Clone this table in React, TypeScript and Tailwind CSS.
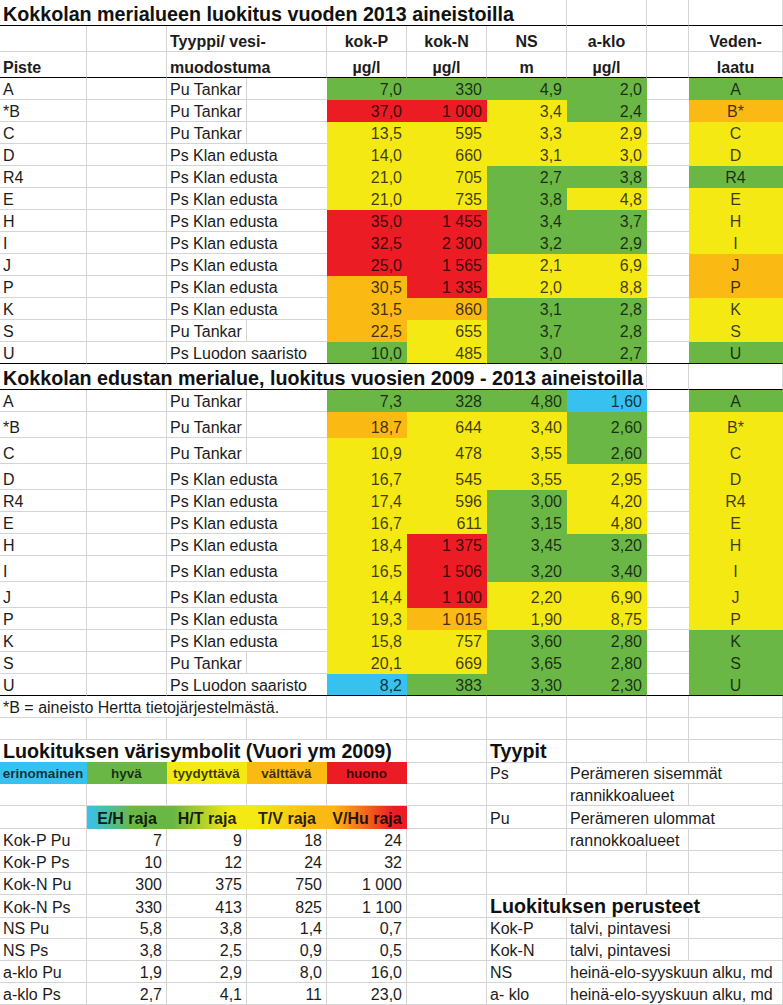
import type { ReactNode } from "react"

type Fill = "G" | "Y" | "R" | "O" | "B"

const FILL: Record<Fill, { bg: string; r: string; b: string }> = {
  G: { bg: "bg-[#6bb746]", r: "border-r-[#6bb746]", b: "border-b-[#6bb746]" },
  Y: { bg: "bg-[#f4e912]", r: "border-r-[#f4e912]", b: "border-b-[#f4e912]" },
  R: { bg: "bg-[#ec1c24]", r: "border-r-[#ec1c24]", b: "border-b-[#ec1c24]" },
  O: { bg: "bg-[#fbb914]", r: "border-r-[#fbb914]", b: "border-b-[#fbb914]" },
  B: { bg: "bg-[#37c1ef]", r: "border-r-[#37c1ef]", b: "border-b-[#37c1ef]" },
}

const COLS = "grid grid-cols-[87px_80px_80px_80px_80px_80px_80px_80px_42px_94px]"

const ALIGN = {
  left: "justify-start pl-[3px]",
  right: "justify-end pr-[4px]",
  center: "justify-center",
}

interface CellProps {
  span?: string
  fill?: Fill
  align?: "left" | "right" | "center"
  black?: boolean
  noRight?: boolean
  className?: string
  children?: ReactNode
}

function Cell({ span = "", fill, align = "left", black, noRight, className = "", children }: CellProps) {
  const f = fill ? FILL[fill] : null
  const right = noRight ? "" : `border-r ${f ? f.r : "border-r-[#d4d4d4]"}`
  const bottom = black ? "border-b-black" : f ? f.b : "border-b-[#d4d4d4]"
  const tone = f ? `${f.bg} text-black/75` : "text-[#1c1c1c]"
  return (
    <div className={`${span} flex items-end whitespace-nowrap border-b ${right} ${bottom} ${tone} ${ALIGN[align]} ${className}`}>
      {children}
    </div>
  )
}

function Row({ h = "h-[22px]", children }: { h?: string; children: ReactNode }) {
  return <div className={`${COLS} ${h}`}>{children}</div>
}

interface Point {
  p: string
  t: string
  v: string[]
  c: string
  l: string
  tall?: boolean
}

const T1: Point[] = [
  { p: "A", t: "Pu Tankar", v: ["7,0", "330", "4,9", "2,0"], c: "GGGGG", l: "A" },
  { p: "*B", t: "Pu Tankar", v: ["37,0", "1 000", "3,4", "2,4"], c: "RRYGO", l: "B*" },
  { p: "C", t: "Pu Tankar", v: ["13,5", "595", "3,3", "2,9"], c: "YYYYY", l: "C" },
  { p: "D", t: "Ps Klan edusta", v: ["14,0", "660", "3,1", "3,0"], c: "YYYYY", l: "D" },
  { p: "R4", t: "Ps Klan edusta", v: ["21,0", "705", "2,7", "3,8"], c: "YYGGG", l: "R4" },
  { p: "E", t: "Ps Klan edusta", v: ["21,0", "735", "3,8", "4,8"], c: "YYGYY", l: "E" },
  { p: "H", t: "Ps Klan edusta", v: ["35,0", "1 455", "3,4", "3,7"], c: "RRGGY", l: "H" },
  { p: "I", t: "Ps Klan edusta", v: ["32,5", "2 300", "3,2", "2,9"], c: "RRGGY", l: "I" },
  { p: "J", t: "Ps Klan edusta", v: ["25,0", "1 565", "2,1", "6,9"], c: "RRYYO", l: "J" },
  { p: "P", t: "Ps Klan edusta", v: ["30,5", "1 335", "2,0", "8,8"], c: "ORYYO", l: "P" },
  { p: "K", t: "Ps Klan edusta", v: ["31,5", "860", "3,1", "2,8"], c: "OOGGY", l: "K" },
  { p: "S", t: "Pu Tankar", v: ["22,5", "655", "3,7", "2,8"], c: "OYGGY", l: "S" },
  { p: "U", t: "Ps Luodon saaristo", v: ["10,0", "485", "3,0", "2,7"], c: "GYGGG", l: "U" },
]

const T2: Point[] = [
  { p: "A", t: "Pu Tankar", v: ["7,3", "328", "4,80", "1,60"], c: "GGGBG", l: "A" },
  { p: "*B", t: "Pu Tankar", v: ["18,7", "644", "3,40", "2,60"], c: "OYYGY", l: "B*", tall: true },
  { p: "C", t: "Pu Tankar", v: ["10,9", "478", "3,55", "2,60"], c: "YYYGY", l: "C", tall: true },
  { p: "D", t: "Ps Klan edusta", v: ["16,7", "545", "3,55", "2,95"], c: "YYYYY", l: "D", tall: true },
  { p: "R4", t: "Ps Klan edusta", v: ["17,4", "596", "3,00", "4,20"], c: "YYGYY", l: "R4" },
  { p: "E", t: "Ps Klan edusta", v: ["16,7", "611", "3,15", "4,80"], c: "YYGYY", l: "E" },
  { p: "H", t: "Ps Klan edusta", v: ["18,4", "1 375", "3,45", "3,20"], c: "YRGGY", l: "H" },
  { p: "I", t: "Ps Klan edusta", v: ["16,5", "1 506", "3,20", "3,40"], c: "YRGGY", l: "I", tall: true },
  { p: "J", t: "Ps Klan edusta", v: ["14,4", "1 100", "2,20", "6,90"], c: "YRYYY", l: "J", tall: true },
  { p: "P", t: "Ps Klan edusta", v: ["19,3", "1 015", "1,90", "8,75"], c: "YOYYY", l: "P" },
  { p: "K", t: "Ps Klan edusta", v: ["15,8", "757", "3,60", "2,80"], c: "YYGGG", l: "K" },
  { p: "S", t: "Pu Tankar", v: ["20,1", "669", "3,65", "2,80"], c: "YYGGG", l: "S" },
  { p: "U", t: "Ps Luodon saaristo", v: ["8,2", "383", "3,30", "2,30"], c: "BGGGG", l: "U" },
]

const LIMITS = [
  ["Kok-P Pu", "7", "9", "18", "24"],
  ["Kok-P Ps", "10", "12", "24", "32"],
  ["Kok-N Pu", "300", "375", "750", "1 000"],
  ["Kok-N Ps", "330", "413", "825", "1 100"],
  ["NS Pu", "5,8", "3,8", "1,4", "0,7"],
  ["NS Ps", "3,8", "2,5", "0,9", "0,5"],
  ["a-klo Pu", "1,9", "2,9", "8,0", "16,0"],
  ["a-klo Ps", "2,7", "4,1", "11", "23,0"],
]

const TITLE = "text-[19.7px] leading-[22px] font-bold text-[#111]"

function PointRow({ d, last }: { d: Point; last?: boolean }) {
  const c = d.c.split("") as Fill[]
  const pu = d.t === "Pu Tankar"
  return (
    <Row h={d.tall ? "h-[26px]" : "h-[22px]"}>
      <Cell black={last}>{d.p}</Cell>
      <Cell black={last} />
      {pu ? (
        <>
          <Cell black={last}>{d.t}</Cell>
          <Cell black={last} noRight />
        </>
      ) : (
        <Cell span="col-span-2" black={last} noRight>
          {d.t}
        </Cell>
      )}
      {d.v.map((v, i) => (
        <Cell key={i} fill={c[i]} align="right" black={last}>
          {v}
        </Cell>
      ))}
      <Cell black={last} noRight />
      <Cell fill={c[4]} align="center" black={last}>
        {d.l}
      </Cell>
    </Row>
  )
}

function Spacers({ n, black }: { n: number; black?: boolean }) {
  return (
    <>
      {Array.from({ length: n }).map((_, i) => (
        <Cell key={i} black={black} />
      ))}
    </>
  )
}

export default function App() {
  return (
    <div className="w-[783px] h-[1005px] overflow-hidden bg-white font-['Liberation_Sans',Arial,sans-serif] text-[16px] leading-[18px]">
      {/* 2013 */}
      <Row h="h-[26px]">
        <Cell span="col-span-7" black className={TITLE}>
          Kokkolan merialueen luokitus vuoden 2013 aineistoilla
        </Cell>
        <Spacers n={3} black />
      </Row>
      <Row h="h-[26px]">
        <Cell />
        <Cell />
        <Cell span="col-span-2" className="font-bold">Tyyppi/ vesi-</Cell>
        <Cell align="center" className="font-bold">kok-P</Cell>
        <Cell align="center" className="font-bold">kok-N</Cell>
        <Cell align="center" className="font-bold">NS</Cell>
        <Cell align="center" className="font-bold">a-klo</Cell>
        <Cell />
        <Cell align="center" className="font-bold">Veden-</Cell>
      </Row>
      <Row h="h-[26px]">
        <Cell black className="font-bold">Piste</Cell>
        <Cell black />
        <Cell span="col-span-2" black className="font-bold">muodostuma</Cell>
        <Cell align="center" black className="font-bold">µg/l</Cell>
        <Cell align="center" black className="font-bold">µg/l</Cell>
        <Cell align="center" black className="font-bold">m</Cell>
        <Cell align="center" black className="font-bold">µg/l</Cell>
        <Cell black />
        <Cell align="center" black className="font-bold">laatu</Cell>
      </Row>
      {T1.map((d, i) => (
        <PointRow key={d.p} d={d} last={i === T1.length - 1} />
      ))}

      {/* 2009 - 2013 */}
      <Row h="h-[26px]">
        <Cell span="col-span-8" black className={TITLE}>
          Kokkolan edustan merialue, luokitus vuosien 2009 - 2013 aineistoilla
        </Cell>
        <Spacers n={2} black />
      </Row>
      {T2.map((d, i) => (
        <PointRow key={d.p} d={d} last={i === T2.length - 1} />
      ))}

      {/* legend + limits */}
      <Row>
        <Cell span="col-span-4">*B = aineisto Hertta tietojärjestelmästä.</Cell>
        <Spacers n={6} />
      </Row>
      <Row>
        <Spacers n={10} />
      </Row>
      <Row>
        <Cell span="col-span-5" className={TITLE}>
          Luokituksen värisymbolit (Vuori ym 2009)
        </Cell>
        <Cell />
        <Cell className={TITLE}>Tyypit</Cell>
        <Spacers n={3} />
      </Row>
      <Row>
        <Cell fill="B" align="center" className="text-[13.5px] font-bold">erinomainen</Cell>
        <Cell fill="G" align="center" className="text-[13.5px] font-bold">hyvä</Cell>
        <Cell fill="Y" align="center" className="text-[13.5px] font-bold">tyydyttävä</Cell>
        <Cell fill="O" align="center" className="text-[13.5px] font-bold">välttävä</Cell>
        <Cell fill="R" align="center" className="text-[13.5px] font-bold">huono</Cell>
        <Cell />
        <Cell>Ps</Cell>
        <Cell span="col-span-3">Perämeren sisemmät</Cell>
      </Row>
      <Row>
        <Spacers n={7} />
        <Cell span="col-span-2">rannikkoalueet</Cell>
        <Cell />
      </Row>
      <Row h="h-[23px]">
        <Cell />
        <div className="col-span-4 grid grid-cols-4 bg-[linear-gradient(90deg,#37c1ef_0%,#6bb746_14%,#6bb746_27%,#f4e912_45%,#f4e912_53%,#fbb914_71%,#fbb914_77%,#ec1c24_96%)] text-black/85 font-bold">
          {["E/H raja", "H/T raja", "T/V raja", "V/Hu raja"].map((t) => (
            <div key={t} className="flex items-end justify-center pb-px">
              {t}
            </div>
          ))}
        </div>
        <Cell />
        <Cell>Pu</Cell>
        <Cell span="col-span-3">Perämeren ulommat</Cell>
      </Row>
      {LIMITS.map((r, i) => (
        <Row key={r[0]}>
          <Cell>{r[0]}</Cell>
          {r.slice(1).map((v, j) => (
            <Cell key={j} align="right">
              {v}
            </Cell>
          ))}
          <Cell />
          {i === 0 && (
            <>
              <Cell />
              <Cell span="col-span-2">rannokkoalueet</Cell>
              <Cell />
            </>
          )}
          {(i === 1 || i === 2) && <Spacers n={4} />}
          {i === 3 && (
            <Cell span="col-span-4" className={TITLE}>
              Luokituksen perusteet
            </Cell>
          )}
          {(i === 4 || i === 5) && (
            <>
              <Cell>{i === 4 ? "Kok-P" : "Kok-N"}</Cell>
              <Cell span="col-span-2">talvi, pintavesi</Cell>
              <Cell />
            </>
          )}
          {(i === 6 || i === 7) && (
            <>
              <Cell>{i === 6 ? "NS" : "a- klo"}</Cell>
              <Cell span="col-span-3">heinä-elo-syyskuun alku, md</Cell>
            </>
          )}
        </Row>
      ))}
    </div>
  )
}
